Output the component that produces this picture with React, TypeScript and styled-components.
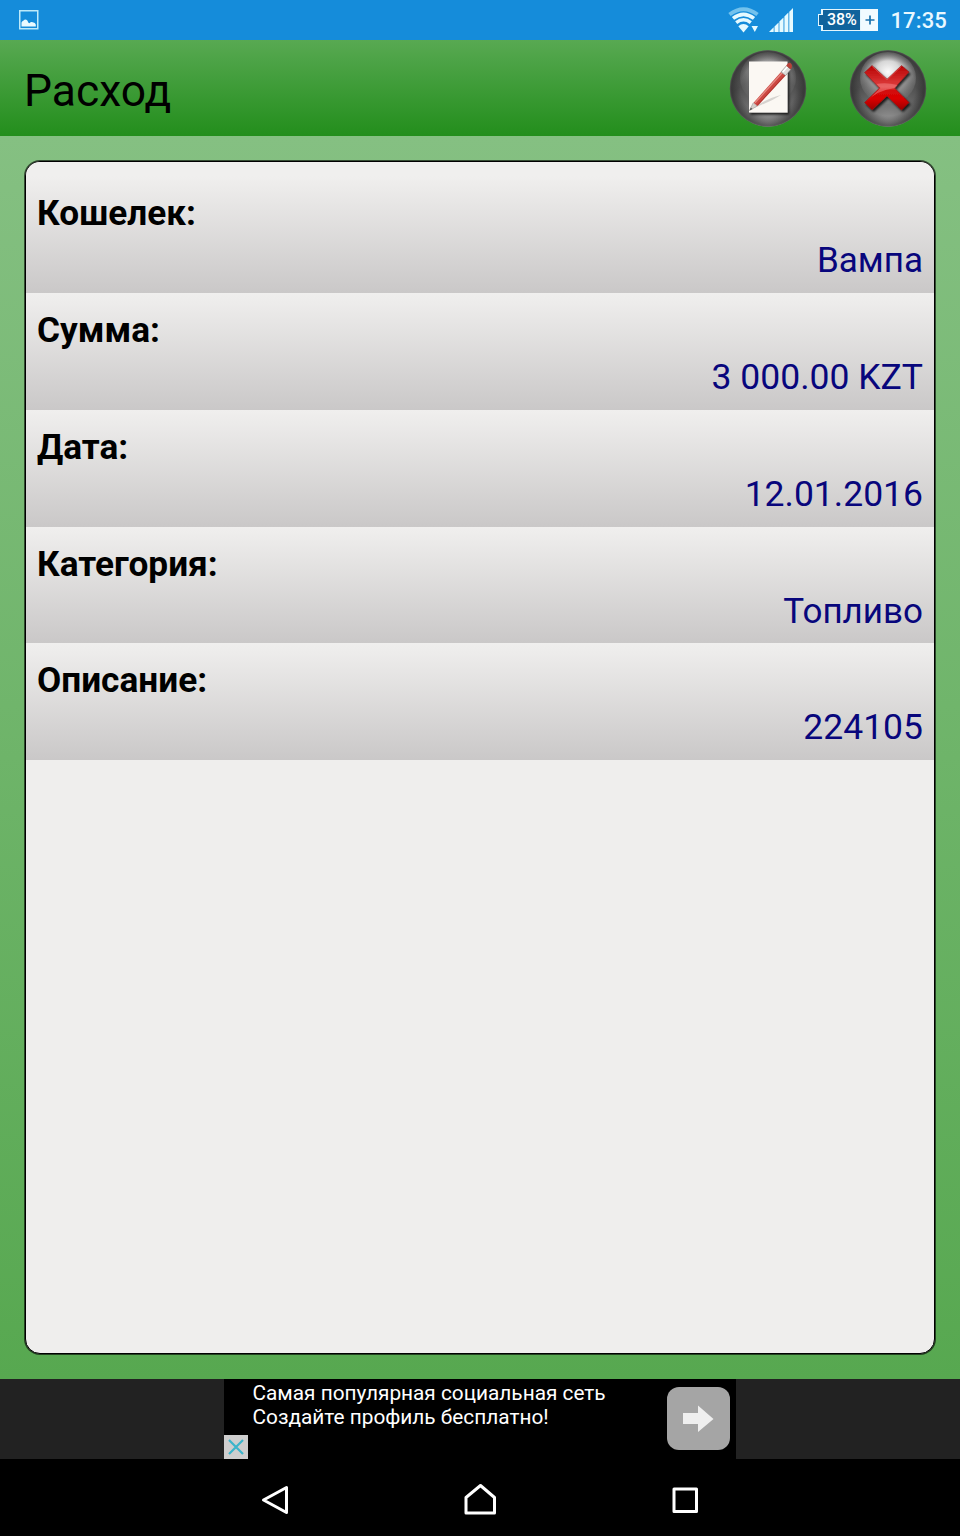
import React from 'react';
import styled, { createGlobalStyle } from 'styled-components';

const GlobalStyle = createGlobalStyle`
  * { box-sizing: border-box; }
  body { margin: 0; background: #000; font-family: Roboto, 'Noto Sans', sans-serif; }
  svg { display: block; }
`;

const Screen = styled.div`
  width: 960px;
  height: 1536px;
  display: flex;
  flex-direction: column;
  overflow: hidden;
`;

const StatusBar = styled.div`
  flex: none;
  height: 40px;
  padding: 0 13px 0 19px;
  display: flex;
  align-items: center;
  justify-content: space-between;
  background: #158cda;
  color: #e9f8ff;
`;

const StatusGroup = styled.div`
  display: flex;
  align-items: center;
`;

const Clock = styled.span`
  margin-left: 12px;
  font-size: 22px;
  line-height: 40px;
  font-weight: 500;
  letter-spacing: 0.15px;
  padding-top: 2px;
`;

const Battery = styled.div`
  margin-left: 24px;
  display: flex;
  align-items: center;
  height: 24px;
`;

const BatteryNub = styled.div`
  width: 5px;
  height: 12px;
  margin-right: -2px;
  border: 1px solid #e4f6fd;
  border-right: 0;
  background: #10639c;
  z-index: 1;
`;

const BatteryLevel = styled.div`
  width: 40px;
  height: 22px;
  border: 1px solid #e4f6fd;
  border-left-width: 2px;
  background: #10639c;
  color: #fff;
  font-size: 16px;
  line-height: 20px;
  font-weight: 500;
  letter-spacing: -0.1px;
  text-align: center;
`;

const BatteryPlus = styled.div`
  width: 17px;
  height: 22px;
  background: #f1fbff;
  display: grid;
  place-items: center;
`;

const Header = styled.header`
  flex: none;
  height: 96px;
  padding: 0 33px 0 24px;
  display: flex;
  align-items: center;
  justify-content: space-between;
  background: linear-gradient(#58a952, #238e1c);
`;

const Title = styled.h1`
  margin: 6px 0 0;
  font-size: 44.4px;
  line-height: 52px;
  font-weight: 400;
  color: #000;
`;

const Actions = styled.div`
  display: flex;
  gap: 42px;
  padding-top: 2px;
`;

const RoundButton = styled.button`
  width: 78px;
  height: 78px;
  padding: 0;
  border: 0;
  background: none;
`;

const Main = styled.main`
  flex: none;
  height: 1243px;
  padding: 25px;
  background: linear-gradient(#85c082, #57a850);
`;

const Panel = styled.section`
  height: 1193px;
  border: 1px solid #000;
  border-radius: 15px;
  box-shadow: 0 0 0 1px rgba(0, 0, 0, 0.6);
  background: #efeeed;
  overflow: hidden;
`;

const Row = styled.div<{ $first?: boolean }>`
  height: ${p => (p.$first ? '131px' : '116.8px')};
  padding: ${p => (p.$first ? '28px' : '14px')} 11px 0;
  background: linear-gradient(#f0efee ${p => (p.$first ? '14px' : '0')}, #cac8c8);
  font-size: 35.4px;
  line-height: 47px;
`;

const Label = styled.div`
  font-weight: 700;
  font-size: 35.2px;
  color: #000;
`;

const Value = styled.div<{ $word: boolean }>`
  text-align: right;
  color: #08067c;
  font-size: ${p => (p.$word ? '35px' : '35.5px')};
`;

const AdStrip = styled.div`
  flex: none;
  height: 80px;
  display: flex;
  justify-content: center;
  background: #222;
`;

const Ad = styled.div`
  width: 512px;
  display: flex;
  background: #000;
`;

const AdClose = styled.div`
  align-self: flex-end;
  width: 24px;
  height: 24px;
  background: #cecece;
`;

const AdText = styled.div`
  flex: 1;
  padding: 2px 0 0 4.5px;
  font-size: 20.8px;
  line-height: 24px;
  color: #fff;
  white-space: nowrap;
`;

const AdArrow = styled.div`
  width: 63px;
  height: 63px;
  margin: 8px 6px 0 0;
  border-radius: 12px;
  background: #a5a5a5;
`;

const NavBar = styled.nav`
  flex: 1;
  background: #000;
  display: flex;
  padding: 24px 258px 0;
  justify-content: space-between;
`;

const Orb = ({ id, bright, children }: { id: string; bright?: boolean; children: React.ReactNode }) => (
  <svg width="78" height="78" viewBox="0 0 78 78">
    <defs>
      <radialGradient id={`${id}-base`} cx="50%" cy="100%" r="85%">
        <stop offset="0" stopColor="#a0a0a0" />
        <stop offset="0.3" stopColor="#787878" />
        <stop offset="0.75" stopColor="#4e4e4e" />
        <stop offset="1" stopColor="#555" />
      </radialGradient>
      <radialGradient id={`${id}-rim`}>
        <stop offset="0.72" stopColor="#222" stopOpacity="0" />
        <stop offset="0.95" stopColor="#222" stopOpacity="0.5" />
        <stop offset="1" stopColor="#555" stopOpacity="0.8" />
      </radialGradient>
      <radialGradient id={`${id}-shine`} cx="50%" cy="38%" r="60%">
        <stop offset="0" stopColor="#fff" stopOpacity="0.98" />
        <stop offset="0.35" stopColor="#eee" stopOpacity="0.85" />
        <stop offset="0.75" stopColor="#aaa" stopOpacity="0.45" />
        <stop offset="1" stopColor="#999" stopOpacity="0.1" />
      </radialGradient>
      <linearGradient id={`${id}-red`} x1="0" y1="0" x2="0" y2="1">
        <stop offset="0" stopColor="#b80000" />
        <stop offset="0.48" stopColor="#e04040" />
        <stop offset="0.56" stopColor="#d20d0d" />
        <stop offset="0.75" stopColor="#d90000" />
        <stop offset="1" stopColor="#990000" />
      </linearGradient>
      <filter id={`${id}-shadow`} x="-20%" y="-20%" width="150%" height="150%">
        <feDropShadow dx="1.5" dy="2" stdDeviation="0.9" floodColor="#000" floodOpacity="0.8" />
      </filter>
    </defs>
    <circle cx="39" cy="38.5" r="38.2" fill={`url(#${id}-base)`} />
    <ellipse cx="39" cy="28" rx="28" ry="26" fill={`url(#${id}-shine)`} opacity={bright ? 1 : 0.55} />
    <circle cx="39" cy="38.5" r="38.2" fill={`url(#${id}-rim)`} />
    {children}
  </svg>
);

const EditIcon = () => (
  <Orb id="edit">
    <path d="M20 11.5H58.5V62.5H20Z" fill="#fbf8f3" filter="url(#edit-shadow)" />
    <path d="M23 59L32 53Q43 47 52 45Q43 51 32 55Z" fill="#d6d3cf" />
    <path d="M20.5 60.5L24.2 52.8L28.2 56Z" fill="#d5d1cc" stroke="#918c88" strokeWidth="0.5" />
    <path d="M20.5 60.5L21.8 57.5L23.6 59Z" fill="#555" />
    <path d="M24.6 52.8L52 22L56.6 25.6L28.6 56Z" fill="#cc4640" />
    <path d="M26 52.8L53.2 22.8" stroke="#e58a82" strokeWidth="1.3" />
    <path d="M28.2 55.4L56 25.2" stroke="#a8332e" strokeWidth="0.9" />
    <path d="M52 22L57.4 15.8L61.8 19.4L56.6 25.6Z" fill="#dddbd9" stroke="#827d7a" strokeWidth="0.6" />
    <path d="M53.8 21.9L58.4 16.8" stroke="#fff" strokeWidth="1.5" />
    <path d="M57.2 15.7Q59.5 11.5 62 13.5Q64 15.8 61.9 19.2L57.2 15.7Z" fill="#b94038" />
  </Orb>
);

const DeleteIcon = () => (
  <Orb id="del" bright>
    <path
      d="M23 15.5L38 29.2L52.5 15.5L60 22L45.5 38L60 52.5L52.5 60L38 46L23 60L15.5 52.5L30.5 38L15.5 22.5Z"
      fill="url(#del-red)" stroke="#8e1616" strokeWidth="0.5" filter="url(#del-shadow)"
    />
    <path d="M23 16.3L38 30L52.5 16.3" fill="none" stroke="#e25353" strokeWidth="0.7" />
    <path d="M16.5 52.5L31.5 38L27.5 34Q37 32 48.5 35L46 38Q28 40 16.5 52.5Z" fill="#f08080" opacity="0.55" />
  </Orb>
);

const PictureIcon = () => (
  <svg width="20" height="20" viewBox="0 0 20 20">
    <rect x="0.75" y="0.75" width="18" height="18" fill="none" stroke="#bdeafa" strokeWidth="1.5" />
    <path d="M2.5 16.5V12.5Q3.2 10.8 4.6 10.5Q5.8 8.8 7.4 9.8Q8.8 10.4 9.2 12.5L10.5 13.2Q12 11.2 13.8 12.3Q16.3 12.6 16.8 14.5V16.5Z" fill="#e9faff" />
  </svg>
);

const WifiIcon = () => (
  <svg width="31" height="26" viewBox="0 0 31 26">
    <g fill="none">
      <path d="M1.5 7.5Q15.5 -3 29.5 7.5" stroke="#73c2ed" strokeWidth="4" />
      <path d="M5 11.4Q15.5 3.2 26 11.4" stroke="#e6faff" strokeWidth="3.6" />
      <path d="M8.2 15.6Q15.5 9.8 22.8 15.6" stroke="#e6faff" strokeWidth="3.4" />
    </g>
    <path d="M10.3 19.2Q15.5 14.8 20.7 19.2L15.5 25.5Z" fill="#e6faff" />
    <path d="M23.5 19H30L26.8 25Z" fill="#e6faff" />
  </svg>
);

const SignalIcon = () => (
  <svg width="25" height="25" viewBox="0 0 25 25">
    <path d="M0 24L4.7 19.3V24ZM5.5 18.5L9.6 14.4V24H5.5ZM10.4 13.6L14.5 9.5V24H10.4ZM15.4 8.6L19.4 4.6V24H15.4ZM20.3 3.7L24 0V24H20.3Z" fill="#e6faff" />
  </svg>
);

const entries = [
  { label: 'Кошелек:', value: 'Вампа' },
  { label: 'Сумма:', value: '3 000.00 KZT' },
  { label: 'Дата:', value: '12.01.2016' },
  { label: 'Категория:', value: 'Топливо' },
  { label: 'Описание:', value: '224105' },
];

export default function App() {
  return (
    <Screen>
      <GlobalStyle />
      <StatusBar>
        <PictureIcon />
        <StatusGroup>
          <WifiIcon />
          <svg width="10" height="1" />
          <SignalIcon />
          <Battery>
            <BatteryNub />
            <BatteryLevel>38%</BatteryLevel>
            <BatteryPlus>
              <svg width="10" height="10" viewBox="0 0 10 10">
                <path d="M5 0.5V9.5M0.5 5H9.5" stroke="#1972ad" strokeWidth="1.7" />
              </svg>
            </BatteryPlus>
          </Battery>
          <Clock>17:35</Clock>
        </StatusGroup>
      </StatusBar>
      <Header>
        <Title>Расход</Title>
        <Actions>
          <RoundButton aria-label="Изменить"><EditIcon /></RoundButton>
          <RoundButton aria-label="Удалить"><DeleteIcon /></RoundButton>
        </Actions>
      </Header>
      <Main>
        <Panel>
          {entries.map((e, i) => (
            <Row key={e.label} $first={i === 0}>
              <Label>{e.label}</Label>
              <Value $word={!/\d/.test(e.value)}>{e.value}</Value>
            </Row>
          ))}
        </Panel>
      </Main>
      <AdStrip>
        <Ad>
          <AdClose>
            <svg width="24" height="24" viewBox="0 0 24 24">
              <path d="M5 5L19 19M19 5L5 19" stroke="#3bb4cb" strokeWidth="2.2" />
            </svg>
          </AdClose>
          <AdText>Самая популярная социальная сеть<br />Создайте профиль бесплатно!</AdText>
          <AdArrow>
            <svg width="63" height="63" viewBox="0 0 63 63">
              <path d="M16 26H31V18.5L46.5 32L31 45V37H16Z" fill="#efefef" />
            </svg>
          </AdArrow>
        </Ad>
      </AdStrip>
      <NavBar>
        <svg width="34" height="34" viewBox="0 0 34 34">
          <path d="M5.5 17L28.5 4.5V29.5Z" fill="none" stroke="#fff" strokeWidth="3" strokeLinejoin="round" />
        </svg>
        <svg width="34" height="34" viewBox="0 0 34 34">
          <path d="M3 30V14.5L17.5 2.5L31.5 14.5V30Z" fill="none" stroke="#fff" strokeWidth="3" strokeLinejoin="round" />
        </svg>
        <svg width="34" height="34" viewBox="0 0 34 34">
          <rect x="6" y="6" width="22.5" height="22.5" fill="none" stroke="#fff" strokeWidth="3" strokeLinejoin="round" />
        </svg>
      </NavBar>
    </Screen>
  );
}
